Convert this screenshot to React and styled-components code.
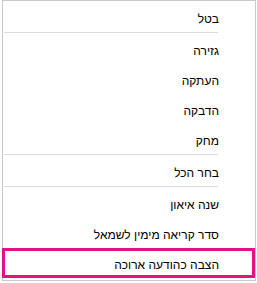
import React from "react";
import styled, { createGlobalStyle } from "styled-components";

const Global = createGlobalStyle`
  body {
    margin: 0;
    background: #fff;
  }
`;

const Menu = styled.div`
  direction: rtl;
  box-sizing: border-box;
  width: 254px;
  height: 281px;
  margin-left: 2px;
  border: 1px solid #c9c9c9;
  background: #fff;
  padding-top: 1px;
  display: flex;
  flex-direction: column;
  font-family: "Liberation Sans", "DejaVu Sans", sans-serif;
  font-size: 12px;
  color: #000;
`;

const Item = styled.div`
  box-sizing: border-box;
  height: 30px;
  display: flex;
  align-items: center;
  padding-right: ${(p) => (p.$active ? "33px" : "36px")};
  padding-top: 3px;
  margin-left: ${(p) => (p.$active ? "-1px" : "0")};
  border: ${(p) => (p.$active ? "3px solid #e5118b" : "none")};
  white-space: nowrap;
`;

const Separator = styled.div`
  height: 1px;
  background: #dadada;
  margin: 0 37px 1px 1px;
`;

const groups = [
  ["בטל"],
  ["גזירה", "העתקה", "הדבקה", "מחק"],
  ["בחר הכל"],
  ["שנה איאון", "סדר קריאה מימין לשמאל"],
];

export default function App() {
  return (
    <>
      <Global />
      <Menu>
        {groups.map((g, i) => (
          <React.Fragment key={i}>
            {g.map((label) => (
              <Item key={label}>{label}</Item>
            ))}
            {i < groups.length - 1 && <Separator />}
          </React.Fragment>
        ))}
        <Item $active>הצבה כהודעה ארוכה</Item>
      </Menu>
    </>
  );
}
